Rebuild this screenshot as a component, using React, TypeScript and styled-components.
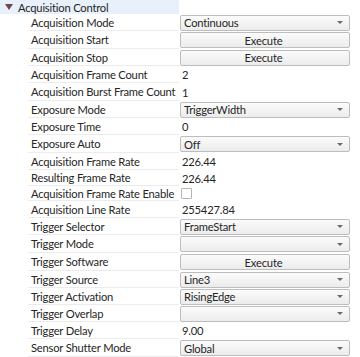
import styled, { createGlobalStyle } from 'styled-components';

const GlobalStyle = createGlobalStyle`
  body {
    margin: 0;
    background: #ffffff;
    font-family: Lato, "Noto Sans", sans-serif;
    font-size: 11.2px;
    letter-spacing: -0.2px;
    color: #262626;
  }
`;

type Kind = 'combo' | 'button' | 'text' | 'check';

interface Feature {
  label: string;
  kind: Kind;
  value?: string;
  h: number;
}

const features: Feature[] = [
  { label: 'Acquisition Mode', kind: 'combo', value: 'Continuous', h: 17 },
  { label: 'Acquisition Start', kind: 'button', h: 18 },
  { label: 'Acquisition Stop', kind: 'button', h: 17 },
  { label: 'Acquisition Frame Count', kind: 'text', value: '2', h: 17 },
  { label: 'Acquisition Burst Frame Count', kind: 'text', value: '1', h: 18 },
  { label: 'Exposure Mode', kind: 'combo', value: 'TriggerWidth', h: 17 },
  { label: 'Exposure Time', kind: 'text', value: '0', h: 17 },
  { label: 'Exposure Auto', kind: 'combo', value: 'Off', h: 18 },
  { label: 'Acquisition Frame Rate', kind: 'text', value: '226.44', h: 17 },
  { label: 'Resulting Frame Rate', kind: 'text', value: '226.44', h: 16 },
  { label: 'Acquisition Frame Rate Enable', kind: 'check', h: 15 },
  { label: 'Acquisition Line Rate', kind: 'text', value: '255427.84', h: 17 },
  { label: 'Trigger Selector', kind: 'combo', value: 'FrameStart', h: 17 },
  { label: 'Trigger Mode', kind: 'combo', value: '', h: 18 },
  { label: 'Trigger Software', kind: 'button', h: 18 },
  { label: 'Trigger Source', kind: 'combo', value: 'Line3', h: 17 },
  { label: 'Trigger Activation', kind: 'combo', value: 'RisingEdge', h: 17 },
  { label: 'Trigger Overlap', kind: 'combo', value: '', h: 17 },
  { label: 'Trigger Delay', kind: 'text', value: '9.00', h: 17 },
  { label: 'Sensor Shutter Mode', kind: 'combo', value: 'Global', h: 18 },
];

const Tree = styled.div`
  width: 360px;
  height: 357px;
  overflow: hidden;
  display: flex;
  flex-direction: column;
`;

const Header = styled.div`
  height: 14px;
  width: 179px;
  display: flex;
  align-items: center;
  gap: 5px;
  padding-left: 5px;
  box-sizing: border-box;
  background: #e8f0fb;
  white-space: nowrap;
`;

const Arrow = styled.span`
  width: 0;
  height: 0;
  border-left: 4px solid transparent;
  border-right: 4px solid transparent;
  border-top: 6px solid #6b4a4a;
`;

const Row = styled.div<{ $h: number }>`
  height: ${(p) => p.$h}px;
  display: grid;
  grid-template-columns: 179px 170px;
  column-gap: 1px;
`;

const Label = styled.div`
  margin-left: 28px;
  padding-left: 3px;
  display: flex;
  align-items: center;
  border-bottom: 1px solid #ececec;
  white-space: nowrap;
  overflow: hidden;
`;

const Cell = styled.div`
  display: flex;
  align-items: center;
  min-width: 0;
`;

const Control = styled.div<{ $center?: boolean }>`
  flex: 1;
  height: 16px;
  box-sizing: border-box;
  border: 1px solid #bdbdbd;
  border-radius: 2px;
  background: linear-gradient(#fbfbfb, #ececec);
  display: flex;
  align-items: center;
  justify-content: ${(p) => (p.$center ? 'center' : 'space-between')};
  padding: 0 6px 0 3px;
  white-space: nowrap;
`;

const Caret = styled.span`
  width: 0;
  height: 0;
  border-left: 3px solid transparent;
  border-right: 3px solid transparent;
  border-top: 3px solid #6a6a6a;
`;

const Value = styled.span`
  padding-left: 2px;
`;

const Check = styled.span`
  width: 11px;
  height: 11px;
  margin-left: 1px;
  box-sizing: border-box;
  border: 1px solid #b5b5b5;
  border-radius: 1px;
  background: #ffffff;
`;

const renderValue = (f: Feature) => {
  switch (f.kind) {
    case 'combo':
      return (
        <Control>
          <span>{f.value}</span>
          <Caret />
        </Control>
      );
    case 'button':
      return <Control $center>Execute</Control>;
    case 'check':
      return <Check />;
    default:
      return <Value>{f.value}</Value>;
  }
};

const App = () => {
  return (
    <>
      <GlobalStyle />
      <Tree>
        <Header>
          <Arrow />
          Acquisition Control
        </Header>
        {features.map((f) => (
          <Row key={f.label} $h={f.h}>
            <Label>{f.label}</Label>
            <Cell>{renderValue(f)}</Cell>
          </Row>
        ))}
      </Tree>
    </>
  );
};

export default App;
